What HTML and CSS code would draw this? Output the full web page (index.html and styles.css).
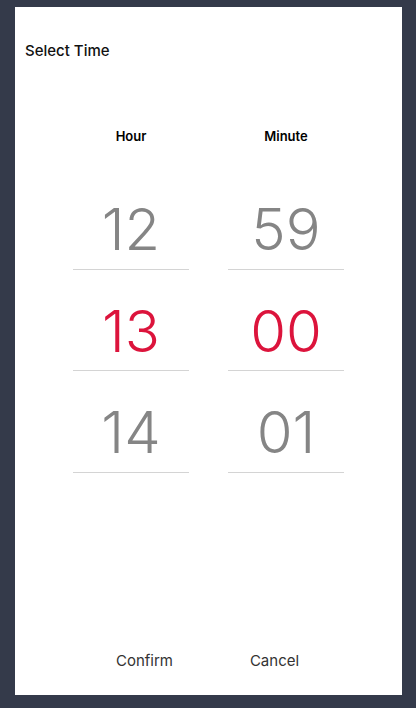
FILE: index.html
```html
<!DOCTYPE html>
<html>
<head>
<meta charset="utf-8">
<link rel="stylesheet" href="styles.css">
</head>
<body>
<div class="card">
  <div class="title">Select Time</div>
  <div class="columns">
    <div class="col">
      <div class="head">Hour</div>
      <div class="cell">12</div>
      <div class="cell active">13</div>
      <div class="cell">14</div>
    </div>
    <div class="col">
      <div class="head">Minute</div>
      <div class="cell">59</div>
      <div class="cell active">00</div>
      <div class="cell">01</div>
    </div>
  </div>
  <div class="actions">
    <button class="btn">Confirm</button>
    <button class="btn">Cancel</button>
  </div>
</div>
</body>
</html>
```

FILE: styles.css
```css
html, body {
  margin: 0;
  height: 100%;
}
body {
  background: #343a4a;
  padding: 7px 14px 13px 15px;
  box-sizing: border-box;
  font-family: Inter, Roboto, "Noto Sans", sans-serif;
}
.card {
  background: #fff;
  height: 688px;
  display: flex;
  flex-direction: column;
  padding-top: 34px;
  box-sizing: border-box;
}
.title {
  padding-left: 10px;
  font-size: 15px;
  line-height: 20px;
  font-weight: 500;
  color: #111;
}
.columns {
  display: flex;
  justify-content: center;
  gap: 39px;
  margin-top: 65px;
}
.col {
  width: 116px;
  display: flex;
  flex-direction: column;
}
.head {
  text-align: center;
  font-size: 13px;
  line-height: 20px;
  font-weight: 600;
  color: #000;
  margin-bottom: 22px;
}
.cell {
  height: 101.5px;
  box-sizing: border-box;
  padding-top: 24px;
  border-bottom: 1px solid #d4d4d4;
  text-align: center;
  font-size: 58px;
  line-height: 74px;
  font-weight: 300;
  color: #858585;
}
.cell.active {
  color: #dc143c;
}
.actions {
  margin-top: auto;
  display: flex;
  justify-content: center;
  gap: 30px;
  padding-bottom: 24px;
  padding-left: 2px;
}
.btn {
  width: 100px;
  background: none;
  border: none;
  padding: 0;
  font-family: inherit;
  font-size: 15px;
  line-height: 20px;
  color: #333;
}
```
